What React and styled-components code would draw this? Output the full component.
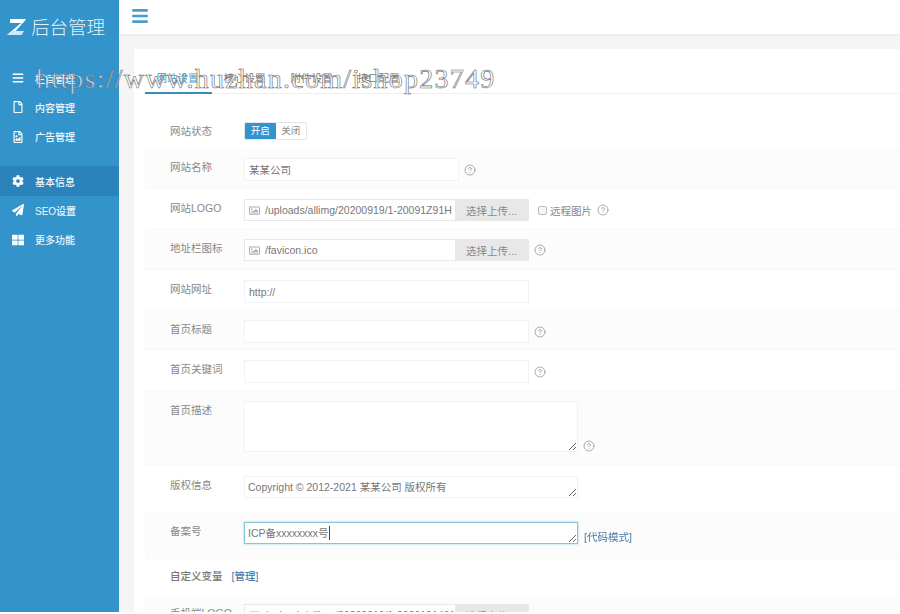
import styled, { createGlobalStyle } from "styled-components";
import { FaBars, FaRegFile, FaRegFileImage, FaCog, FaPaperPlane, FaThLarge, FaRegImage } from "react-icons/fa";
import { CircleHelp } from "lucide-react";

const GlobalStyle = createGlobalStyle`
  html, body {
    margin: 0;
    padding: 0;
    height: 100%;
    overflow: hidden;
    background: #fff;
  }
  * { box-sizing: border-box; }
`;

const FONT = `"Liberation Sans", "Noto Sans CJK SC", sans-serif`;

const Page = styled.div`
  display: flex;
  position: relative;
  width: 900px;
  height: 612px;
  overflow: hidden;
  font-family: ${FONT};
  font-size: 10.5px;
  color: #888;
  background: #f5f5f5;
  filter: blur(0.4px);
`;

const Sidebar = styled.aside`
  flex: 0 0 119px;
  background: #3394cc;
  color: #fff;
`;

const Logo = styled.div`
  height: 63.5px;
  display: flex;
  align-items: flex-start;
  gap: 5px;
  padding: 17px 0 0 7px;
  font-size: 18.5px;
  line-height: 22px;
  font-weight: 300;
  color: #e3f2fa;

  svg {
    margin-top: 2px;
  }
`;

const NavGroup = styled.nav`
  margin-bottom: 15px;
`;

const NavItem = styled.div`
  height: 29.3px;
  display: flex;
  align-items: center;
  gap: 11px;
  padding-left: 12px;
  font-weight: 500;
  font-size: 10px;
  color: #eef7fc;
  background: ${(p) => (p.$active ? "#2a84bb" : "transparent")};

  svg {
    width: 12px;
    height: 12px;
    flex: none;
    color: #fff;
  }
`;

const Main = styled.main`
  flex: 1;
  min-width: 0;
  display: flex;
  flex-direction: column;
`;

const Topbar = styled.header`
  height: 34px;
  flex: none;
  background: #fff;
  padding: 7px 0 0 13px;
  color: #4a9cc9;
  box-shadow: 0 1px 3px rgba(0, 0, 0, 0.06);

  svg {
    width: 16px;
    height: 18px;
    display: block;
  }
`;

const Card = styled.section`
  flex: 1;
  margin: 15px 0 0 15px;
  background: #fff;
  padding: 0 0 0 11px;
  overflow: hidden;
`;

const Tabs = styled.div`
  height: 45px;
  display: flex;
  align-items: flex-end;
  border-bottom: 1px solid #f0f0f0;
`;

const Tab = styled.div`
  width: 67px;
  height: 30px;
  line-height: 29px;
  text-align: center;
  font-size: 10.5px;
  margin-bottom: -1px;
  padding-right: 2px;
  color: ${(p) => (p.$active ? "#4a9cc9" : "#777")};
  border-bottom: 2px solid ${(p) => (p.$active ? "#3a8cb8" : "transparent")};
`;

const Form = styled.div`
  padding-top: 19px;
`;

const Row = styled.div`
  display: flex;
  align-items: flex-start;
  height: ${(p) => p.$h}px;
  padding: ${(p) => p.$pad ?? 10}px 0 0 25px;
  background: ${(p) => (p.$alt ? "#fcfcfc" : "#fff")};
  border-bottom: 1px solid #f9f9f9;
`;

const Label = styled.div`
  flex: 0 0 74px;
  line-height: 16px;
  padding-top: 1px;
  color: #888;
`;

const Field = styled.div`
  display: flex;
  position: relative;
  align-items: ${(p) => (p.$end ? "flex-end" : "center")};
`;

const Switch = styled.div`
  display: flex;
  height: 18px;
  width: 63px;
  border-radius: 2px;
  overflow: hidden;
  border: 1px solid #e6e6e6;
`;

const SwitchPart = styled.div`
  flex: 1;
  line-height: 16px;
  text-align: center;
  font-size: 9.5px;
  background: ${(p) => (p.$on ? "#3193cf" : "#fff")};
  color: ${(p) => (p.$on ? "#fff" : "#888")};
`;

const TextInput = styled.input`
  display: block;
  width: ${(p) => p.$w}px;
  height: 23px;
  padding: 0 4px;
  border: 1px solid #f2f2f2;
  outline: none;
  background: #fff;
  font: 10.5px ${FONT};
  color: #777;
`;

const Area = styled.textarea`
  display: block;
  width: 334px;
  height: ${(p) => p.$h}px;
  padding: 4px 3px;
  margin: 0;
  border: 1px solid ${(p) => (p.$focus ? "#86c5da" : "#f2f2f2")};
  box-shadow: ${(p) => (p.$focus ? "0 0 2px rgba(82, 168, 200, 0.6)" : "none")};
  outline: none;
  background: #fff;
  font: 10.5px/13px ${FONT};
  color: #777;
`;

// the text cursor standing at the end of the focused field
const Caret = styled.span`
  position: absolute;
  left: 85px;
  top: 4px;
  width: 1px;
  height: 14px;
  background: #444;
`;

const UploadBox = styled.div`
  display: flex;
  width: 285px;
  height: 22px;
  border: 1px solid #e8e8e8;
  background: #fff;
`;

const UploadPath = styled.div`
  flex: 1;
  min-width: 0;
  display: flex;
  align-items: center;
  gap: 5px;
  padding-left: 4px;
  white-space: nowrap;
  overflow: hidden;
  color: #777;

  svg {
    flex: none;
    width: 11px;
    height: 11px;
    color: #b0b0b0;
  }
`;

const UploadButton = styled.div`
  flex: 0 0 73px;
  line-height: 22px;
  text-align: center;
  background: #e8e8e8;
  color: #888;
`;

const Help = styled(CircleHelp)`
  width: 12px;
  height: 12px;
  margin-left: 5px;
  flex: none;
  color: #8f8f8f;
  stroke-width: 1.5;
`;

const Check = styled.span`
  width: 9px;
  height: 9px;
  margin: 0 3px 0 9px;
  border: 1px solid #bbb;
  border-radius: 2px;
  background: #f6f6f6;
`;

const LinkText = styled.a`
  color: #4a7aa8;
  margin-left: ${(p) => p.$gap ?? 6}px;
`;

const SectionTitle = styled.div`
  height: 35px;
  padding: 8px 0 0 25px;
  line-height: 16px;
  color: #777;
  font-weight: 500;
`;

const Watermark = styled.div`
  position: absolute;
  left: 36px;
  top: 63px;
  font-family: "Liberation Serif", serif;
  font-size: 28px;
  line-height: 32px;
  letter-spacing: 1.25px;
  white-space: nowrap;
  color: rgba(255, 255, 255, 0.6);
  -webkit-text-stroke: 0.6px #6a6a6a;
  pointer-events: none;
`;

function LogoMark() {
  return (
    <svg width="19" height="16" viewBox="0 0 19 16">
      <polygon points="3,0 19,0 16,4 3,4" fill="#fff" />
      <polygon points="14,4 19,0 8,13 0,16 " fill="#fff" />
      <polygon points="5,12 17,12 14.5,16 0,16" fill="#cfe9f8" />
    </svg>
  );
}

function Upload({ path }) {
  return (
    <UploadBox>
      <UploadPath>
        <FaRegImage />
        {path}
      </UploadPath>
      <UploadButton>选择上传...</UploadButton>
    </UploadBox>
  );
}

export default function App() {
  return (
    <>
      <GlobalStyle />
      <Page>
        <Sidebar>
          <Logo>
            <LogoMark />
            后台管理
          </Logo>
          <NavGroup>
            <NavItem><FaBars />栏目管理</NavItem>
            <NavItem><FaRegFile />内容管理</NavItem>
            <NavItem><FaRegFileImage />广告管理</NavItem>
          </NavGroup>
          <NavGroup>
            <NavItem $active><FaCog />基本信息</NavItem>
            <NavItem><FaPaperPlane />SEO设置</NavItem>
            <NavItem><FaThLarge />更多功能</NavItem>
          </NavGroup>
        </Sidebar>
        <Main>
          <Topbar><FaBars /></Topbar>
          <Card>
            <Tabs>
              <Tab $active>网站设置</Tab>
              <Tab>核心设置</Tab>
              <Tab>附件设置</Tab>
              <Tab>接口配置</Tab>
            </Tabs>
            <Form>
              <Row $h={37} $pad={9}>
                <Label>网站状态</Label>
                <Switch>
                  <SwitchPart $on>开启</SwitchPart>
                  <SwitchPart>关闭</SwitchPart>
                </Switch>
              </Row>
              <Row $h={39} $pad={8} $alt>
                <Label>网站名称</Label>
                <Field>
                  <TextInput $w={215} defaultValue="某某公司" />
                  <Help />
                </Field>
              </Row>
              <Row $h={40}>
                <Label>网站LOGO</Label>
                <Field>
                  <Upload path="/uploads/allimg/20200919/1-20091Z91H" />
                  <Check />
                  远程图片
                  <Help />
                </Field>
              </Row>
              <Row $h={41} $alt>
                <Label>地址栏图标</Label>
                <Field>
                  <Upload path="/favicon.ico" />
                  <Help />
                </Field>
              </Row>
              <Row $h={40}>
                <Label>网站网址</Label>
                <TextInput $w={285} defaultValue="http://" />
              </Row>
              <Row $h={40} $alt>
                <Label>首页标题</Label>
                <Field>
                  <TextInput $w={285} />
                  <Help />
                </Field>
              </Row>
              <Row $h={41}>
                <Label>首页关键词</Label>
                <Field>
                  <TextInput $w={285} />
                  <Help />
                </Field>
              </Row>
              <Row $h={75} $alt>
                <Label>首页描述</Label>
                <Field $end>
                  <Area $h={51} />
                  <Help />
                </Field>
              </Row>
              <Row $h={48}>
                <Label>版权信息</Label>
                <Area $h={22} defaultValue="Copyright © 2012-2021 某某公司 版权所有" />
              </Row>
              <Row $h={46} $pad={8} $alt>
                <Label>备案号</Label>
                <Field $end>
                  <Area $h={22} $focus defaultValue="ICP备xxxxxxxx号" />
                  <Caret />
                  <LinkText>[代码模式]</LinkText>
                </Field>
              </Row>
              <SectionTitle>
                自定义变量
                <LinkText $gap={9}>[管理]</LinkText>
              </SectionTitle>
              <Row $h={40} $pad={9} $alt>
                <Label>手机端LOGO</Label>
                <Upload path="/uploads/allimg/20200919/1-2009191401" />
              </Row>
            </Form>
          </Card>
        </Main>
        <Watermark>https://www.huzhan.com/ishop23749</Watermark>
      </Page>
    </>
  );
}
